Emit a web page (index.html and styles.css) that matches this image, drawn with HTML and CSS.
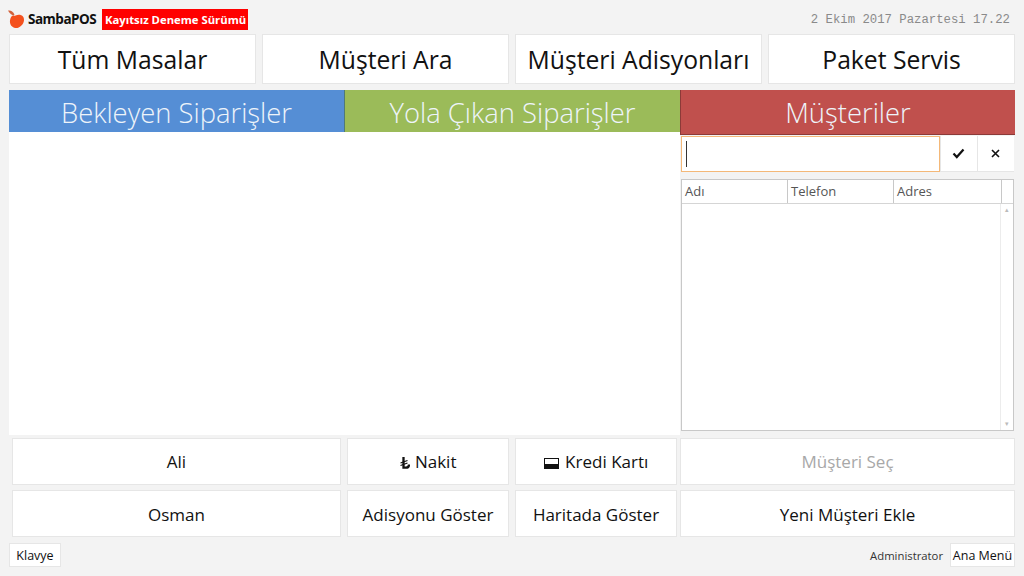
FILE: index.html
```html
<!DOCTYPE html>
<html lang="tr">
<head>
<meta charset="utf-8">
<title>SambaPOS</title>
<link rel="stylesheet" href="styles.css">
</head>
<body>
<div class="page">
  <header class="topbar">
    <div class="brand">
      <svg class="logo" width="17" height="19" viewBox="0 0 17 19"><path d="M0 .5 C2.500 0 5 1 6.500 4.500 L5.500 5.500 C4 5 1.500 3.500 0 .5Z" fill="#d2613a"/><path d="M7.500 5.500 C12 3.500 16.500 5.500 16 10.500 C15.500 15 11 18.500 7.500 18 C3.500 17.500 1.500 14 2 10.500 C2.300 8 3.500 5 5.500 5.500 C6.200 5.800 6.800 5.800 7.500 5.500Z" fill="#f4511e"/></svg>
      <span class="brand-name">SambaPOS</span>
      <span class="trial">Kayıtsız Deneme Sürümü</span>
    </div>
    <div class="clock">2 Ekim 2017 Pazartesi 17.22</div>
  </header>

  <nav class="nav">
    <button class="btn nav-btn">Tüm Masalar</button>
    <button class="btn nav-btn">Müşteri Ara</button>
    <button class="btn nav-btn">Müşteri Adisyonları</button>
    <button class="btn nav-btn">Paket Servis</button>
  </nav>

  <main class="main">
    <section class="orders">
      <div class="orders-heads">
        <h2 class="head head-blue">Bekleyen Siparişler</h2>
        <h2 class="head head-green">Yola Çıkan Siparişler</h2>
      </div>
      <div class="orders-body"></div>
    </section>
    <section class="customers">
      <h2 class="head head-red">Müşteriler</h2>
      <div class="search">
        <div class="search-input"><span class="caret"></span></div>
        <button class="search-btn"><svg width="13" height="11" viewBox="0 0 13 11"><path d="M1.500 5.500 L4.800 9 L11.500 1.500" fill="none" stroke="#111" stroke-width="2.200"/></svg></button>
        <button class="search-btn"><svg width="9" height="9" viewBox="0 0 9 9"><path d="M1 1 L8 8 M8 1 L1 8" fill="none" stroke="#111" stroke-width="1.600"/></svg></button>
      </div>
      <div class="grid">
        <div class="grid-head">
          <span class="col">Adı</span>
          <span class="col">Telefon</span>
          <span class="col">Adres</span>
          <span class="col col-end"></span>
        </div>
        <div class="grid-body">
          <div class="grid-rows"></div>
          <div class="scrollbar"><span class="arrow">▴</span><span class="arrow">▾</span></div>
        </div>
      </div>
    </section>
  </main>

  <section class="actions">
    <div class="actions-left">
      <button class="btn act">Ali</button>
      <button class="btn act"><svg class="lira" width="10" height="12" viewBox="0 0 10 12"><path d="M3.500 0 V10.700 H6 C8 10.700 9 9.500 9 7.500" fill="none" stroke="#111" stroke-width="2.300"/><path d="M.5 6 L7.500 3.500 M.5 8.500 L7.500 6" fill="none" stroke="#111" stroke-width="1.300"/></svg> Nakit</button>
      <button class="btn act"><svg class="card" width="15" height="11" viewBox="0 0 15 11"><rect x=".5" y=".5" width="14" height="10" fill="#fff" stroke="#111"/><rect x="0" y="6" width="15" height="5" fill="#111"/></svg> Kredi Kartı</button>
      <button class="btn act act-low">Osman</button>
      <button class="btn act act-low">Adisyonu Göster</button>
      <button class="btn act act-low">Haritada Göster</button>
    </div>
    <div class="actions-right">
      <button class="btn act act-disabled">Müşteri Seç</button>
      <button class="btn act act-low">Yeni Müşteri Ekle</button>
    </div>
  </section>

  <footer class="footer">
    <button class="btn small klavye">Klavye</button>
    <div class="user">
      <span class="user-name">Administrator</span>
      <button class="btn small menu">Ana Menü</button>
    </div>
  </footer>
</div>
</body>
</html>
```

FILE: styles.css
```css
* { box-sizing: border-box; }
html, body { margin: 0; height: 100%; }
body {
  background: #f3f3f3;
  font-family: "Open Sans", "Noto Sans", "Liberation Sans", sans-serif;
  color: #111;
  overflow: hidden;
}
.page { width: 1024px; height: 576px; padding: 0 9px; }

.topbar { height: 34px; display: flex; justify-content: space-between; align-items: flex-start; }
.brand { display: flex; align-items: center; height: 22px; margin-top: 8px; margin-left: -1px; }
.logo { margin-right: 3px; }
.brand-name { font-family: "Open Sans", sans-serif; font-weight: 700; font-size: 13.500px; letter-spacing: -.5px; width: 74px; }
.trial { background: #f00; color: #fff; font-weight: 700; font-size: 11.300px; height: 21px; line-height: 21px; padding: 0 3px; width: 146px; white-space: nowrap; }
.clock { font-family: "Liberation Mono", monospace; font-size: 12.300px; color: #8a8a8a; margin: 13px 5px 0 0; }

.btn {
  background: #fff;
  border: 1px solid #e6e6e6;
  font-family: inherit;
  color: #111;
  padding: 0;
  white-space: nowrap;
}

.nav { display: grid; grid-template-columns: repeat(4, 247px); column-gap: 6px; height: 50px; margin-bottom: 6px; }
.nav-btn { font-size: 24.700px; }

.main { display: grid; grid-template-columns: 671px 335px; height: 345px; }
.head { margin: 0; color: #eef4fa; font-weight: 300; font-size: 27.400px; text-align: center; white-space: nowrap; }
.orders-heads { display: grid; grid-template-columns: 335px 336px; height: 42px; }
.head-blue { background: #558ed5; line-height: 46px; overflow: hidden; }
.head-green { background: #9bbb59; line-height: 46px; border-left: 1px solid #4f7a78; overflow: hidden; }
.head-red { background: #c0504d; height: 45px; line-height: 46px; border-left: 1px solid #8c3a38; border-bottom: 1px solid #8c3a38; overflow: hidden; }
.orders-body { background: #fff; height: 303px; }

.customers { padding-left: 1px; }
.customers .head-red { margin-left: -1px; }
.search { display: flex; height: 36px; margin-top: 1px; }
.search-input { width: 259px; background: #fff; border: 1px solid #f4b878; padding: 4px; }
.caret { display: block; width: 1px; height: 26px; background: #333; }
.search-btn { width: 37px; background: #fff; border: 0; border-left: 1px solid #e6e6e6; padding: 0 2px 0 0; display: flex; align-items: center; justify-content: center; border-bottom: 1px solid #e6e6e6; }

.grid { margin-top: 7px; width: 333px; height: 252px; border: 1px solid #c8c8c8; background: #fff; display: flex; flex-direction: column; }
.grid-head { display: grid; grid-template-columns: 106px 106px 108px 1fr; height: 24px; border-bottom: 1px solid #d5d5d5; background: #fff; }
.col { font-size: 13px; color: #555; line-height: 23px; padding-left: 3px; border-right: 1px solid #c8c8c8; }
.col-end { border-right: 0; }
.grid-body { flex: 1; display: flex; }
.grid-rows { flex: 1; }
.scrollbar { width: 13px; border-left: 1px solid #ececec; display: flex; flex-direction: column; justify-content: space-between; align-items: center; }
.arrow { font-size: 7px; line-height: 12px; color: #bbb; }

.actions { display: flex; column-gap: 3px; margin-top: 3px; padding-left: 3px; }
.actions-left { display: grid; grid-template-columns: 329px 162px 162px; grid-auto-rows: 47px; gap: 5px 6px; }
.actions-right { display: grid; grid-template-columns: 335px; grid-auto-rows: 47px; row-gap: 5px; }
.act { font-size: 17px; }
.act-low { padding-top: 2px; }
.act-disabled { color: #a8a8a8; }
.lira { vertical-align: -1px; margin-right: 1px; }
.card { vertical-align: -1px; margin-right: 2px; }

.footer { display: flex; justify-content: space-between; margin-top: 6px; }
.small { height: 24px; font-size: 12.500px; }
.klavye { width: 52px; }
.menu { width: 65px; }
.user { display: flex; align-items: center; column-gap: 7px; }
.user-name { font-size: 11.300px; color: #333; }
```
